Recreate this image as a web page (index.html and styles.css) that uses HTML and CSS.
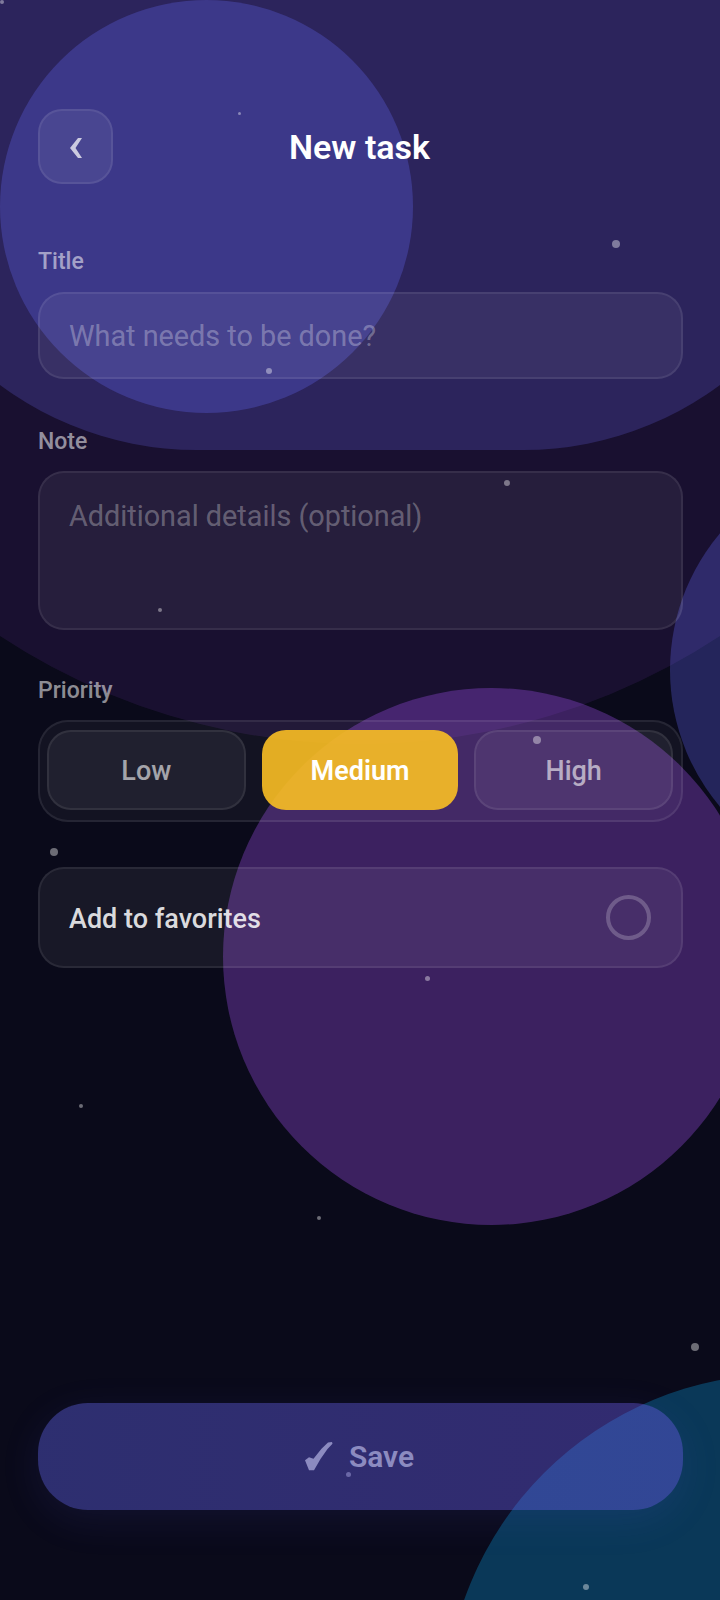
FILE: index.html
```html
<!DOCTYPE html>
<html lang="en">
<head>
  <meta charset="UTF-8" />
  <meta name="viewport" content="width=device-width, initial-scale=1" />
  <title>New task</title>
  <link rel="stylesheet" href="styles.css">
</head>
<body>

  <div class="backdrop" aria-hidden="true">
    <div class="blob blob-glow"></div>
    <div class="blob blob-band"></div>
    <div class="blob blob-indigo"></div>
    <div class="blob blob-purple"></div>
    <div class="blob blob-side"></div>
    <div class="blob blob-teal"></div>
    <span class="dot dot-1"></span>
    <span class="dot dot-2"></span>
    <span class="dot dot-3"></span>
    <span class="dot dot-4"></span>
    <span class="dot dot-5"></span>
    <span class="dot dot-6"></span>
    <span class="dot dot-7"></span>
    <span class="dot dot-8"></span>
    <span class="dot dot-9"></span>
    <span class="dot dot-10"></span>
    <span class="dot dot-11"></span>
    <span class="dot dot-12"></span>
    <span class="dot dot-13"></span>
    <span class="dot dot-14"></span>
  </div>

  <main class="screen">
    <header class="top-bar">
      <button class="back-btn" aria-label="Back">
        <svg width="12" height="20" viewBox="0 0 12 20">
          <path fill="currentColor" d="M8 0h4L5.500 10 12 20H8L0 10z"/>
        </svg>
      </button>
      <h1 class="page-title">New task</h1>
    </header>

    <form class="task-form">
      <label class="field-label" for="title">Title</label>
      <input class="text-field title-field" id="title" type="text" placeholder="What needs to be done?" />

      <label class="field-label" for="note">Note</label>
      <textarea class="text-field note-field" id="note" placeholder="Additional details (optional)"></textarea>

      <span class="field-label">Priority</span>
      <div class="priority-group">
        <button type="button" class="priority-btn">Low</button>
        <button type="button" class="priority-btn is-active">Medium</button>
        <button type="button" class="priority-btn">High</button>
      </div>

      <div class="favorite-row">
        <span class="favorite-text">Add to favorites</span>
        <span class="radio"></span>
      </div>
    </form>

    <button class="save-btn" disabled>
      <svg width="28" height="29" viewBox="0 0 28 29">
        <path fill="currentColor" d="M27 0l-4 0.500L16.500 6.700 8.500 16.700l-4.500-1.500-4 3.100 4 10h5L15.500 17 22.500 7l5-5.300z"/>
      </svg>
      <span>Save</span>
    </button>
  </main>

</body>
</html>
```

FILE: styles.css
```css
* {
  box-sizing: border-box;
}

html, body {
  margin: 0;
  padding: 0;
}

body {
  position: relative;
  width: 720px;
  height: 1600px;
  overflow: hidden;
  background-color: #0a0a1a;
  font-family: 'Roboto', sans-serif;
  color: #fff;
}

/* background shapes */
.backdrop {
  position: absolute;
  top: 0;
  left: 0;
  width: 720px;
  height: 1600px;
  overflow: hidden;
}

.blob {
  position: absolute;
  border-radius: 50%;
}

.blob-glow {
  left: -294px;
  top: -564px;
  width: 1308px;
  height: 1308px;
  background-color: rgba(160, 80, 240, 0.105);
}

.blob-band {
  left: -134px;
  top: -400px;
  width: 988px;
  height: 850px;
  border-radius: 331px;
  background-color: rgba(104, 102, 236, 0.24);
}

.blob-indigo {
  left: 0;
  top: 0;
  width: 413px;
  height: 413px;
  background-color: rgba(99, 102, 241, 0.3);
}

.blob-purple {
  left: 223px;
  top: 688px;
  width: 537px;
  height: 537px;
  background-color: rgba(168, 85, 247, 0.32);
}

.blob-side {
  left: 670px;
  top: 458px;
  width: 424px;
  height: 424px;
  background-color: rgba(99, 102, 241, 0.3);
}

.blob-teal {
  left: 445px;
  top: 1374px;
  width: 676px;
  height: 676px;
  background-color: rgba(14, 165, 233, 0.3);
}

.dot {
  position: absolute;
  border-radius: 50%;
  background-color: rgba(255, 255, 255, 0.4);
}

.dot-1 { left: 0; top: 0; width: 4px; height: 4px; }
.dot-2 { left: 238px; top: 112px; width: 3px; height: 3px; }
.dot-3 { left: 612px; top: 240px; width: 8px; height: 8px; }
.dot-4 { left: 266px; top: 368px; width: 6px; height: 6px; }
.dot-5 { left: 504px; top: 480px; width: 6px; height: 6px; }
.dot-6 { left: 158px; top: 608px; width: 4px; height: 4px; }
.dot-7 { left: 533px; top: 736px; width: 8px; height: 8px; }
.dot-8 { left: 50px; top: 848px; width: 8px; height: 8px; }
.dot-9 { left: 425px; top: 976px; width: 5px; height: 5px; }
.dot-10 { left: 79px; top: 1104px; width: 4px; height: 4px; }
.dot-11 { left: 317px; top: 1216px; width: 4px; height: 4px; }
.dot-12 { left: 691px; top: 1343px; width: 8px; height: 8px; }
.dot-13 { left: 346px; top: 1472px; width: 5px; height: 5px; }
.dot-14 { left: 583px; top: 1584px; width: 6px; height: 6px; }

/* screen content */
.screen {
  position: relative;
  display: flex;
  flex-direction: column;
  height: 1600px;
  padding: 109px 37px 90px 38px;
}

.top-bar {
  position: relative;
  display: flex;
  align-items: center;
  justify-content: center;
  height: 75px;
  padding-right: 2px;
}

.back-btn {
  position: absolute;
  left: 0;
  top: 0;
  display: flex;
  align-items: center;
  justify-content: center;
  width: 75px;
  height: 75px;
  padding: 2px 0 0;
  color: rgba(255, 255, 255, 0.72);
  background-color: rgba(255, 255, 255, 0.07);
  border: 2px solid rgba(255, 255, 255, 0.08);
  border-radius: 24px;
}

.page-title {
  margin: 0;
  padding-top: 1px;
  font-size: 34px;
  font-weight: 600;
  color: #fff;
}

.task-form {
  display: flex;
  flex-direction: column;
  padding-top: 16px;
}

.field-label {
  display: block;
  margin-top: 48px;
  margin-bottom: 15px;
  font-size: 23px;
  line-height: 28px;
  font-weight: 500;
  color: rgba(255, 255, 255, 0.55);
}

.text-field {
  display: block;
  width: 100%;
  padding: 0 29px;
  font-family: inherit;
  font-size: 28.8px;
  color: #fff;
  background-color: rgba(255, 255, 255, 0.06);
  border: 2px solid rgba(255, 255, 255, 0.08);
  border-radius: 26px;
  outline: none;
  resize: none;
}

.text-field::placeholder {
  color: rgba(255, 255, 255, 0.3);
}

.title-field {
  height: 87px;
  margin: 1px 0;
}

.note-field {
  height: 159px;
  margin-bottom: -1px;
  padding: 26px 29px;
  line-height: 34px;
}

.priority-group {
  display: grid;
  grid-template-columns: repeat(3, 1fr);
  gap: 15px;
  padding: 8px 8px 10px 7px;
  background-color: rgba(255, 255, 255, 0.04);
  border: 2px solid rgba(255, 255, 255, 0.08);
  border-radius: 30px;
}

.priority-btn {
  height: 80px;
  padding: 2px 0 0;
  font-family: inherit;
  font-size: 27px;
  font-weight: 500;
  color: rgba(255, 255, 255, 0.6);
  background-color: rgba(255, 255, 255, 0.06);
  border: 2px solid rgba(255, 255, 255, 0.08);
  border-radius: 24px;
}

.priority-btn.is-active {
  margin: 0 1px;
  color: #fff;
  font-weight: 600;
  background-color: rgba(251, 191, 36, 0.9);
  border-color: transparent;
}

.favorite-row {
  display: flex;
  align-items: center;
  justify-content: space-between;
  height: 101px;
  margin-top: 45px;
  padding: 0 30px 0 29px;
  font-size: 27px;
  font-weight: 500;
  color: rgba(255, 255, 255, 0.85);
  background-color: rgba(255, 255, 255, 0.06);
  border: 2px solid rgba(255, 255, 255, 0.08);
  border-radius: 26px;
}

.favorite-text {
  padding-top: 2px;
}

.radio {
  width: 45px;
  height: 45px;
  border: 4px solid rgba(255, 255, 255, 0.22);
  border-radius: 50%;
}

.save-btn {
  display: flex;
  align-items: center;
  justify-content: center;
  gap: 16px;
  height: 107px;
  margin-top: auto;
  padding: 0 2px 0 0;
  font-family: inherit;
  font-size: 30px;
  font-weight: 600;
  color: #8c8bc0;
  background: linear-gradient(90deg, rgba(99, 102, 241, 0.4), rgba(110, 92, 241, 0.4));
  border: none;
  border-radius: 50px;
  box-shadow: 0 10px 40px rgba(99, 102, 241, 0.1);
}
```
